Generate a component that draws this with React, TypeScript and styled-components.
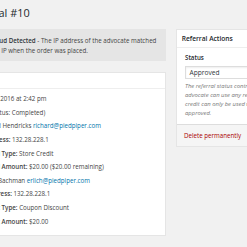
import React from "react";
import styled, { createGlobalStyle } from "styled-components";

const Global = createGlobalStyle`
  html, body {
    margin: 0;
    padding: 0;
    background: #f1f1f1;
    overflow: hidden;
  }
  body {
    font-family: "Open Sans", "Liberation Sans", sans-serif;
    color: #444;
    width: 247px;
    height: 247px;
  }
`;

const Page = styled.div`
  padding-top: 4px;
  width: 420px;
`;

const Title = styled.h1`
  margin: 0 0 7px -33px;
  font-size: 10.9px;
  line-height: 18px;
  font-weight: 400;
  color: #23282d;
  white-space: nowrap;
`;

const Columns = styled.div`
  display: flex;
  align-items: flex-start;
  gap: 10px;
  margin-left: -75px;
`;

const MainCol = styled.div`
  width: 241px;
  flex: none;
  display: flex;
  flex-direction: column;
  gap: 11px;
`;

const Notice = styled.div`
  background: #e5e5e5;
  border-left: 2px solid #e5e5e5;
  padding: 7px 6px 6px 34.1px;
  font-size: 6.2px;
  line-height: 9.5px;
  color: #444;
  white-space: nowrap;
  b { font-weight: 600; color: #32373c; }
`;

const Box = styled.div`
  background: #fff;
  border: 1px solid #e5e5e5;
`;

const BoxHeader = styled.div`
  height: 15px;
  border-bottom: 1px solid #eee;
`;

const Rows = styled.div`
  padding: 3.2px 8px 6.8px 22px;
`;

const Row = styled.div`
  font-size: 6.2px;
  line-height: 13.6px;
  white-space: nowrap;
  color: #444;
`;

const Label = styled.span`
  font-weight: 600;
  color: #444;
`;

const Link = styled.a`
  color: #0073aa;
  text-decoration: none;
`;

const Side = styled.div`
  width: 152px;
  flex: none;
  background: #fff;
  border: 1px solid #e5e5e5;
`;

const SideHeader = styled.h2`
  margin: 0;
  height: 17px;
  padding-left: 4.7px;
  border-bottom: 1px solid #eee;
  font-size: 6.65px;
  line-height: 17px;
  font-weight: 600;
  color: #23282d;
  white-space: nowrap;
`;

const SideBody = styled.div`
  padding: 4.5px 8px 6.5px 8px;
`;

const FieldLabel = styled.div`
  font-size: 6.2px;
  line-height: 9px;
  font-weight: 600;
  color: #23282d;
  margin-bottom: 4.5px;
`;

const Select = styled.div`
  box-sizing: border-box;
  height: 13px;
  border: 1px solid #ddd;
  box-shadow: inset 0 1px 2px rgba(0, 0, 0, 0.07);
  padding: 0 3.5px;
  font-size: 6.65px;
  line-height: 11px;
  color: #32373c;
  background: #fff;
  display: flex;
  align-items: center;
  justify-content: space-between;
`;

const Help = styled.p`
  margin: 3.3px 0 0 0;
  font-size: 5.9px;
  line-height: 8.8px;
  font-style: italic;
  color: #777;
  white-space: nowrap;
`;

const SideFooter = styled.div`
  border-top: 1px solid #ddd;
  background: #f5f5f5;
  height: 21px;
  padding-left: 7px;
  display: flex;
  align-items: center;
`;

const Delete = styled.a`
  color: #a00;
  font-size: 6.2px;
  text-decoration: none;
`;

export default function App() {
  return (
    <>
      <Global />
      <Page>
        <Title>Referral #10</Title>
        <Columns>
          <MainCol>
            <Notice>
              <b>Potential Fraud Detected</b> - The IP address of the advocate matched
              <br />
              the customer IP when the order was placed.
            </Notice>
            <Box>
              <BoxHeader />
              <Rows>
                <Row>
                  <Label>Created:</Label> April 10, 2016 at 2:42 pm
                </Row>
                <Row>
                  <Label>Order:</Label> <Link href="#">#1234</Link> (Status: Completed)
                </Row>
                <Row>
                  <Label>Advocate:</Label> Richard Hendricks{" "}
                  <Link href="#">richard@piedpiper.com</Link>
                </Row>
                <Row>
                  <Label>Advocate IP Address:</Label> 132.28.228.1
                </Row>
                <Row>
                  <Label>Advocate Reward Type:</Label> Store Credit
                </Row>
                <Row>
                  <Label>Advocate Reward Amount:</Label> $20.00 ($20.00 remaining)
                </Row>
                <Row>
                  <Label>Customer:</Label> Erlich Bachman{" "}
                  <Link href="#">erlich@piedpiper.com</Link>
                </Row>
                <Row>
                  <Label>Customer IP Address:</Label> 132.28.228.1
                </Row>
                <Row>
                  <Label>Referral Discount Type:</Label> Coupon Discount
                </Row>
                <Row>
                  <Label>Referral Discount Amount:</Label> $20.00
                </Row>
              </Rows>
            </Box>
          </MainCol>
          <Side>
            <SideHeader>Referral Actions</SideHeader>
            <SideBody>
              <FieldLabel>Status</FieldLabel>
              <Select>
                <span>Approved</span>
              </Select>
              <Help>
                The referral status controls whether the
                <br />
                advocate can use any rewards. Store
                <br />
                credit can only be used when the referral is
                <br />
                approved.
              </Help>
            </SideBody>
            <SideFooter>
              <Delete href="#">Delete permanently</Delete>
            </SideFooter>
          </Side>
        </Columns>
      </Page>
    </>
  );
}
